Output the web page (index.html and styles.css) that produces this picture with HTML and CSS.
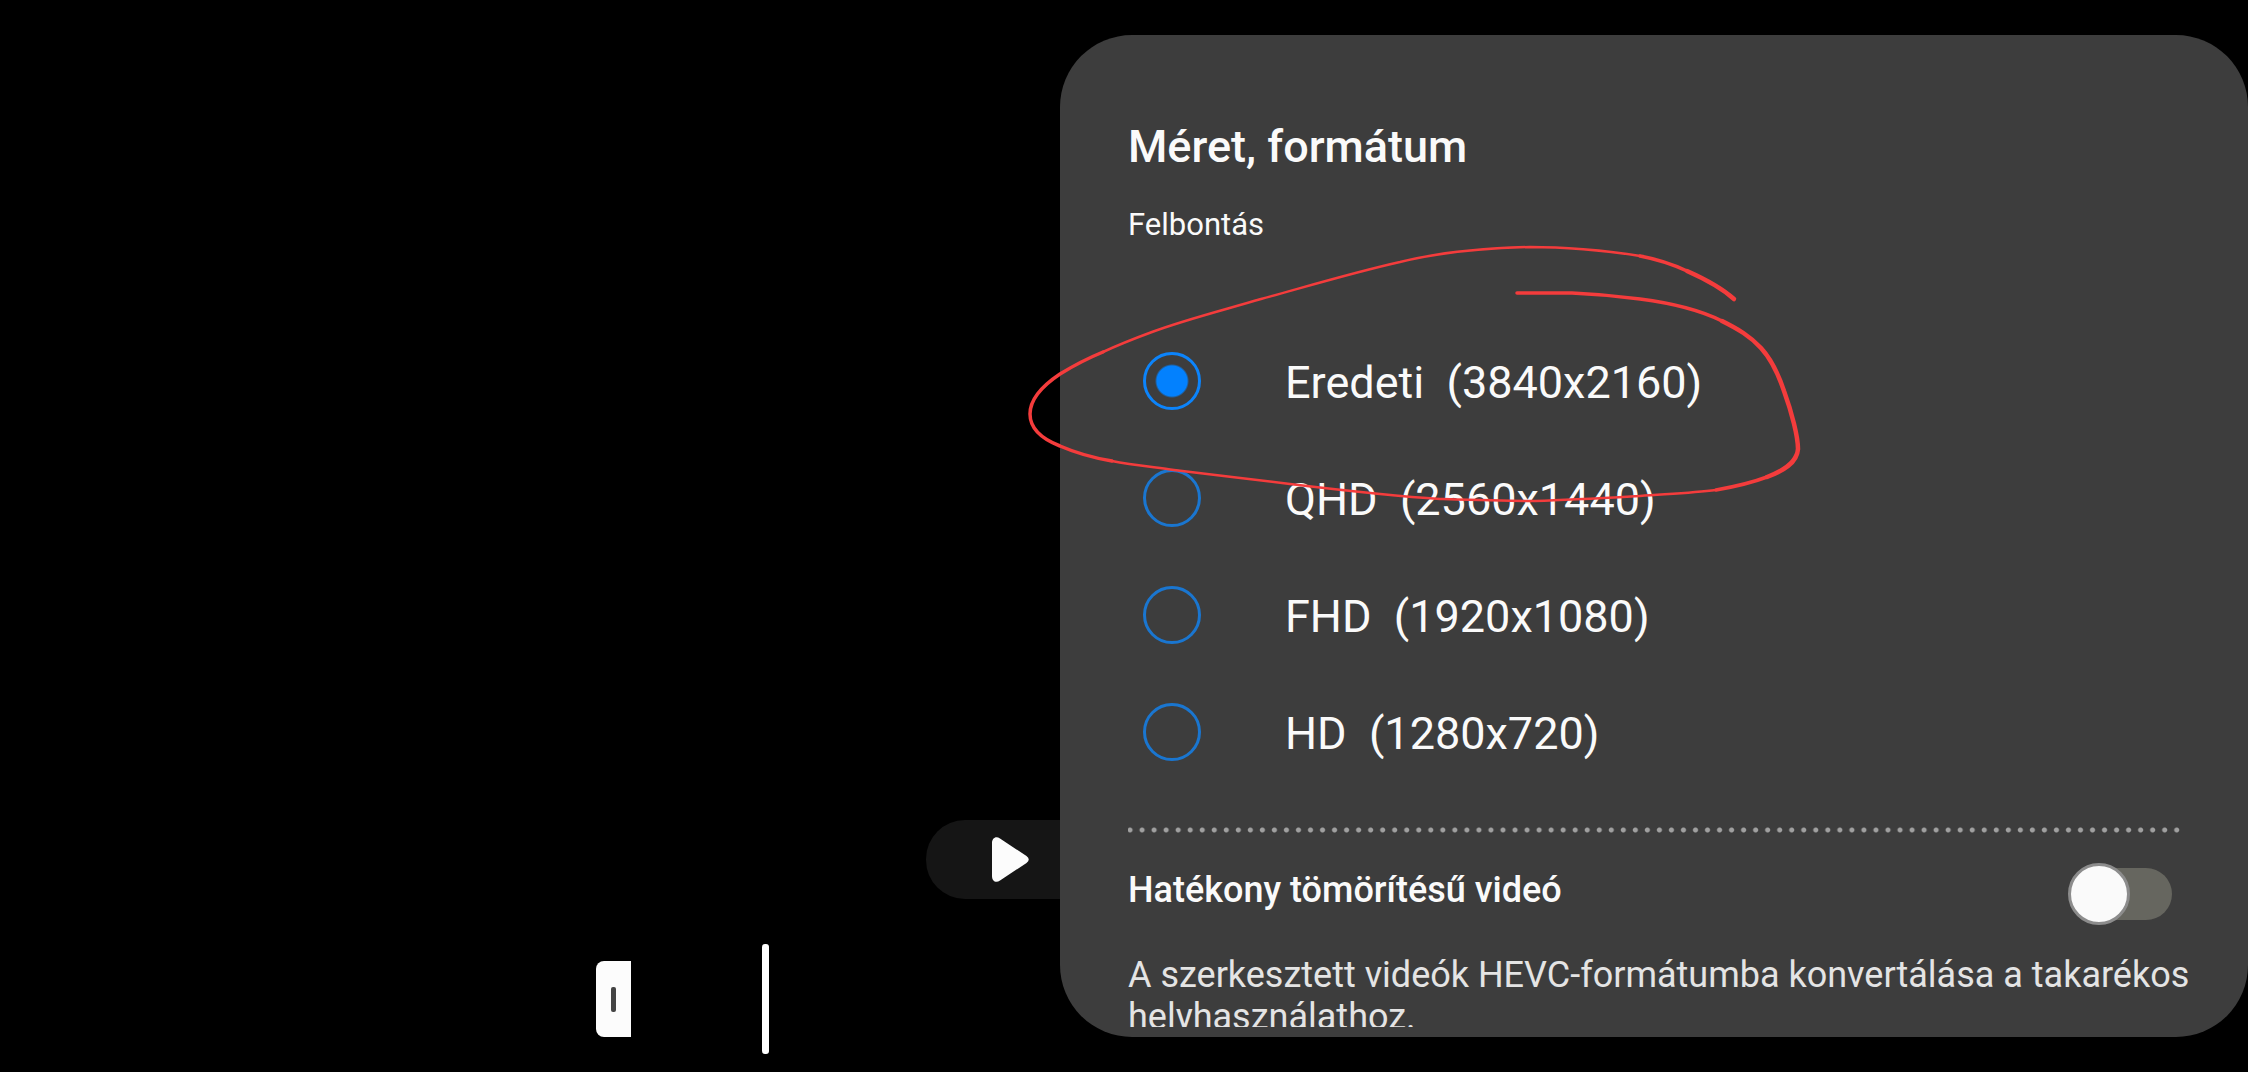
FILE: index.html
```html
<!DOCTYPE html>
<html lang="hu">
<head>
<meta charset="utf-8">
<meta name="viewport" content="width=device-width, initial-scale=1">
<title>Méret, formátum</title>
<link rel="stylesheet" href="styles.css">
</head>
<body>
<main class="editor">
  <section class="stage">
    <button class="play" type="button" aria-label="Lejátszás">
      <svg class="play-icon" viewBox="0 0 37 46" aria-hidden="true"><path d="M0 6C0 1 4 -1.500 8 1.500L34.500 19Q39 22.500 34.500 26L8 43.500C4 46.500 0 44 0 39Z"/></svg>
    </button>
    <div class="timeline">
      <button class="trim-handle" type="button" aria-label="Vágás kezdete"><span class="grip"></span></button>
      <div class="playhead"></div>
    </div>
  </section>

  <section class="panel">
    <form class="panel-scroll">
      <h1 class="title">Méret, formátum</h1>
      <fieldset class="options">
        <legend class="legend">Felbontás</legend>
        <label class="option"><input class="radio" type="radio" name="resolution" checked><span class="option-name">Eredeti  (3840x2160)</span></label>
        <label class="option"><input class="radio" type="radio" name="resolution"><span class="option-name">QHD  (2560x1440)</span></label>
        <label class="option"><input class="radio" type="radio" name="resolution"><span class="option-name">FHD  (1920x1080)</span></label>
        <label class="option"><input class="radio" type="radio" name="resolution"><span class="option-name">HD  (1280x720)</span></label>
      </fieldset>
      <div class="divider"></div>
      <div class="setting">
        <label class="setting-name" for="hevc">Hatékony tömörítésű videó</label>
        <input class="switch" type="checkbox" role="switch" id="hevc" aria-describedby="hevc-note">
      </div>
      <p class="note" id="hevc-note">A szerkesztett videók HEVC-formátumba konvertálása a takarékos helyhasználathoz.</p>
    </form>
    <svg class="scribble" viewBox="1020 235 800 280" aria-hidden="true">
      <path class="pen-thin" d="M1640 256C1605 250 1560 247 1530 247C1490 248 1440 252 1400 262C1355 272 1305 287 1261 299C1220 311 1184 320 1152 332C1133 339 1118 345 1103 352"/>
      <path class="pen-medium" d="M1103 352C1086 359 1073 366 1060 374C1042 386 1030 400 1030 414C1030 428 1042 439 1060 446C1076 453 1094 458 1112 461"/>
      <path class="pen-thin" d="M1112 461C1132 465 1153 467 1174 470C1213 475 1251 479 1290 484C1340 490 1390 496 1440 499C1473 500 1505 501 1535 501C1571 500 1605 498 1640 496C1666 494 1692 493 1716 490"/>
      <path class="pen-medium" d="M1517 293L1572 293C1596 294 1618 296 1640 299C1671 303 1702 311 1722 321"/>
      <path class="pen-medium" d="M1716 490C1733 487 1751 483 1767 477"/>
      <path class="pen-medium" d="M1640 256C1656 259 1672 264 1687 271"/>
      <path class="pen-thick" d="M1722 321C1738 329 1750 336 1761 348C1772 360 1779 376 1784 391C1792 413 1798 437 1798 449C1797 463 1783 471 1767 477"/>
      <path class="pen-thick" d="M1687 271C1705 279 1724 290 1734 299"/>
    </svg>
  </section>
</main>
</body>
</html>
```
FILE: styles.css
```css
*,
*::before {
  box-sizing: border-box;
}

body {
  margin: 0;
  background: #000;
  color: #fafafa;
  font-family: Roboto, "Noto Sans", sans-serif;
}

.editor {
  display: grid;
  grid-template-columns: 1060fr 1188fr;
  grid-template-rows: minmax(0, 1fr);
  height: 100vh;
}

.stage {
  display: flex;
  flex-direction: column;
  justify-content: flex-end;
  gap: 45px;
  padding-bottom: 18px;
}

.play {
  align-self: flex-end;
  width: 134px;
  height: 79px;
  padding: 0 0 0 66px;
  border: 0;
  border-radius: 39px 0 0 39px;
  background: #151515;
  text-align: left;
}

.play-icon {
  display: block;
  width: 37px;
  height: 46px;
  fill: #fcfcfc;
}

.timeline {
  display: flex;
  align-items: center;
  gap: 131px;
  padding-left: 596px;
}

.trim-handle {
  display: grid;
  place-items: center;
  width: 35px;
  height: 76px;
  padding: 0;
  border: 0;
  border-radius: 8px 0 0 8px;
  background: #fcfcfc;
}

.grip {
  width: 5px;
  height: 25px;
  border-radius: 2px;
  background: #444;
}

.playhead {
  width: 7px;
  height: 110px;
  border-radius: 3px;
  background: #fff;
}

.panel {
  position: relative;
  min-width: 0;
  min-height: 0;
  margin: 35px 0;
  padding: 0 56px 10px 68px;
  border-radius: 72px;
  background: #3d3d3d;
}

.panel-scroll {
  height: 100%;
  padding-top: 84px;
  overflow: hidden;
}

.title {
  margin: 0;
  font-size: 45px;
  font-weight: 500;
  line-height: 56px;
}

.options {
  margin: 0;
  padding: 0;
  border: 0;
}

.legend {
  padding: 30px 0 77px;
  font-size: 31px;
  line-height: 40px;
}

.option {
  display: flex;
  align-items: center;
  gap: 84px;
  height: 117px;
  padding-left: 15px;
  font-size: 45px;
  white-space: pre;
}

.option-name {
  padding-top: 3px;
}

.radio {
  appearance: none;
  flex: none;
  width: 58px;
  height: 58px;
  margin: 0;
  border: 3px solid #1a76d0;
  border-radius: 50%;
}

.radio:checked {
  border-color: #0c84fb;
  background: radial-gradient(circle, #0381fe 15px, transparent 17px);
}

.divider {
  height: 6px;
  margin: 37px 8px 0 -4px;
  background: radial-gradient(circle, #a0a0a0 2px, transparent 3px) 0 0 / 12px 6px round;
}

.setting {
  display: flex;
  align-items: flex-start;
  justify-content: space-between;
  padding: 35px 20px 0 0;
}

.setting-name {
  font-size: 36px;
  font-weight: 500;
  line-height: 44px;
}

.switch {
  appearance: none;
  display: flex;
  align-items: center;
  width: 100px;
  height: 52px;
  margin: 0;
  border-radius: 26px;
  background: #66665f;
}

.switch::before {
  content: "";
  flex: none;
  width: 62px;
  height: 62px;
  margin-left: -4px;
  border: 3px solid #8c8c8c;
  border-radius: 50%;
  background: #fafafa;
}

.note {
  margin: 34px 0 0;
  color: #e4e4e4;
  font-size: 36px;
  line-height: 42px;
}

/* Hand-drawn mark around the selected option */
.scribble {
  position: absolute;
  top: 200px;
  left: -40px;
  width: 800px;
  height: 280px;
  fill: none;
  stroke: #f43c3c;
  stroke-linecap: round;
  pointer-events: none;
}

.pen-thin {
  stroke-width: 2.5;
}

.pen-medium {
  stroke-width: 3.5;
}

.pen-thick {
  stroke-width: 4.5;
}
```
